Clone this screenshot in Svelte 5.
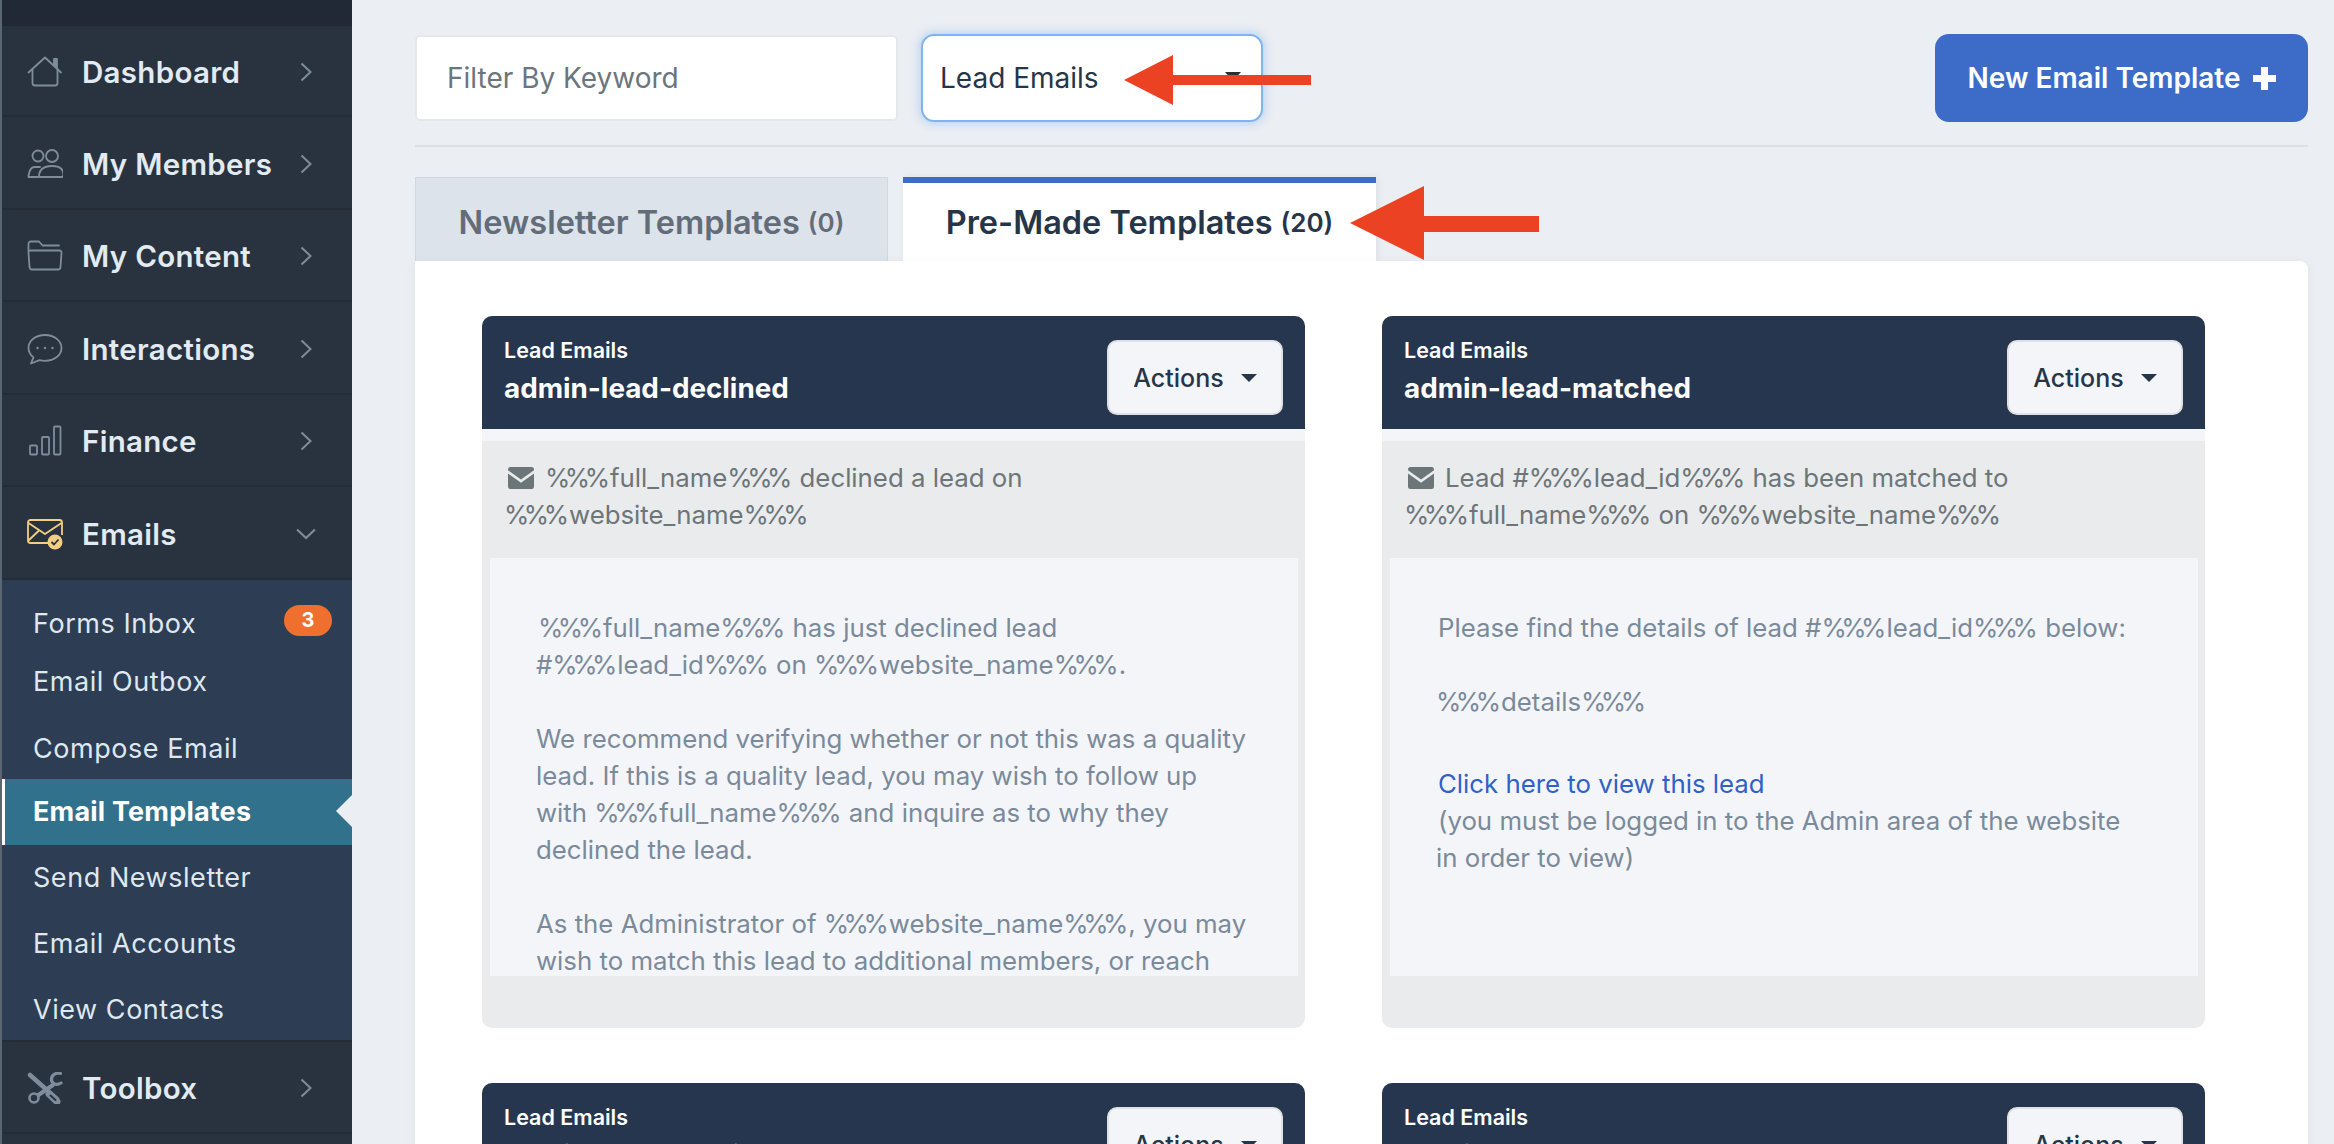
<script>
  const topNav = [
    { label: 'Dashboard', icon: 'home' },
    { label: 'My Members', icon: 'members' },
    { label: 'My Content', icon: 'folder' },
    { label: 'Interactions', icon: 'chat' },
    { label: 'Finance', icon: 'bars' }
  ];
  const subNav = [
    { label: 'Forms Inbox', badge: 3, cls: 'inbox' },
    { label: 'Email Outbox', cls: 'outbox' },
    { label: 'Compose Email', cls: 'compose' },
    { label: 'Email Templates', active: true },
    { label: 'Send Newsletter' },
    { label: 'Email Accounts' },
    { label: 'View Contacts' }
  ];

  // the merge tags sit tighter than the rest of the text
  const parts = (text) => text.split(/(%%%)/);
</script>

{#snippet tagged(text)}
  {#each parts(text) as part}{#if part === '%%%'}<span class="pc">%%%</span>{:else}{part}{/if}{/each}
{/snippet}

{#snippet navIcon(name)}
  <svg class="nav-icon" viewBox="0 0 36 32" fill="none" stroke="#7f8d9b" stroke-width="1.8" stroke-linecap="round" stroke-linejoin="round">
    {#if name === 'home'}
      <path d="M1.5 16.5 18 1.5l16 15" />
      <path d="M5.5 13.5V27a2.500 2.500 0 0 0 2.500 2.500h20a2.500 2.500 0 0 0 2.500-2.500V13.500" />
      <path d="M27 3h3v9l-3-2.800z" fill="#7f8d9b" />
    {:else if name === 'members'}
      <circle cx="11" cy="8" r="5.500" />
      <circle cx="25" cy="8" r="6" />
      <path d="M13 19H7.500Q3 19 1.500 27.500V29H11" />
      <path d="M12 29q0-11 13-11t11 11z" />
    {:else if name === 'folder'}
      <path d="M1.500 11V4a2.500 2.500 0 0 1 2.500-2.500h8l3.500 4H32" />
      <path d="M3.500 10.500h29a2 2 0 0 1 2 2.200L33.500 27a2.500 2.500 0 0 1-2.500 2.500H5A2.500 2.500 0 0 1 2.500 27L1.500 12.700a2 2 0 0 1 2-2.200z" />
    {:else if name === 'chat'}
      <path d="M18 2C8.500 2 1.500 7.800 1.500 15c0 3.800 2 7 5 9.400L4 30.500l8.500-3.300c1.800.4 3.600.6 5.500.6 9.500 0 16.500-5.700 16.500-12.800S27.500 2 18 2z" />
      <circle cx="10.500" cy="15" r="1.200" fill="#7f8d9b" stroke="none" />
      <circle cx="18" cy="15" r="1.200" fill="#7f8d9b" stroke="none" />
      <circle cx="25.500" cy="15" r="1.200" fill="#7f8d9b" stroke="none" />
    {:else if name === 'bars'}
      <rect x="3" y="20.500" width="7" height="9" rx="1" />
      <rect x="15" y="12" width="7" height="17.500" rx="1" />
      <rect x="27" y="1.500" width="6.500" height="28" rx="1" />
    {/if}
  </svg>
{/snippet}

{#snippet chevron()}
  <svg class="chev" viewBox="0 0 12 20" fill="none" stroke="#7f8d9b" stroke-width="2"><path d="m1.500 1.500 9 8.500-9 8.500" /></svg>
{/snippet}

{#snippet card(title, body)}
  <article class="card">
    <header class="card-head">
      <div>
        <div class="cat">Lead Emails</div>
        <div class="name">{title}</div>
      </div>
      <button class="actions">Actions <i class="caret"></i></button>
    </header>
    <div class="card-body">
      {@render body()}
    </div>
  </article>
{/snippet}

{#snippet mail()}
  <svg class="mail" viewBox="0 0 26 22"><path fill="#6c7679" d="M2.500 0h21A2.500 2.500 0 0 1 26 2.500v.8L13 12.500 0 3.300v-.8A2.500 2.500 0 0 1 2.500 0zM0 6.500l13 9.200 13-9.200v13a2.500 2.500 0 0 1-2.500 2.500h-21A2.500 2.500 0 0 1 0 19.500z" /></svg>
{/snippet}

{#snippet declined()}
  <div class="subject">{@render mail()}{@render tagged('%%%full_name%%% declined a lead on')}<br />{@render tagged('%%%website_name%%%')}</div>
  <div class="preview">
    <p class="nudge">{@render tagged('%%%full_name%%% has just declined lead')}<br /><span class="back">{@render tagged('#%%%lead_id%%% on %%%website_name%%%.')}</span></p>
    <p>We recommend verifying whether or not this was a quality<br />lead. If this is a quality lead, you may wish to follow up<br />with {@render tagged('%%%full_name%%% and inquire as to why they')}<br />declined the lead.</p>
    <p>As the Administrator of {@render tagged('%%%website_name%%%, you may')}<br />wish to match this lead to additional members, or reach</p>
  </div>
{/snippet}

{#snippet matched()}
  <div class="subject">{@render mail()}{@render tagged('Lead #%%%lead_id%%% has been matched to')}<br />{@render tagged('%%%full_name%%% on %%%website_name%%%')}</div>
  <div class="preview">
    <p class="nudge">{@render tagged('Please find the details of lead #%%%lead_id%%% below:')}</p>
    <p>{@render tagged('%%%details%%%')}</p>
    <p class="link-block"><a href="#lead" class="nudge">Click here to view this lead</a><br /><span class="nudge">(you must be logged in to the Admin area of the website</span><br />in order to view)</p>
  </div>
{/snippet}

{#snippet empty()}
  <div class="subject"></div>
{/snippet}

<div class="app">
  <aside class="sidebar">
    <div class="top"></div>
    {#each topNav as item}
      <div class="nav-row">
        {@render navIcon(item.icon)}
        <span class="nav-label">{item.label}</span>
        {@render chevron()}
      </div>
    {/each}
    <div class="nav-row">
      <svg class="nav-icon" viewBox="0 0 36 32" fill="none" stroke="#f3cf83" stroke-width="1.800" stroke-linejoin="round">
        <path d="M23 25H3.500A2.500 2.500 0 0 1 1 22.500v-18A2.500 2.500 0 0 1 3.500 2h29A2.500 2.500 0 0 1 35 4.500V17" />
        <path d="m1.500 5 16.500 11L34.500 5M1.500 22.500 12 12.500" />
        <circle cx="28" cy="24" r="7.500" fill="#f3cf83" stroke="none" />
        <path d="m24.500 24 2.500 2.500 4.500-5" stroke="#29333f" stroke-width="1.800" />
      </svg>
      <span class="nav-label">Emails</span>
      <svg class="chev-down" viewBox="0 0 20 12" fill="none" stroke="#7f8d9b" stroke-width="2"><path d="m1 1.500 9 8.500 9-8.500" /></svg>
    </div>
    <nav class="subnav">
      {#each subNav as item}
        <div class="sub-row {item.cls ?? ''}" class:active={item.active}>
          <span>{item.label}</span>
          {#if item.badge}<span class="badge">{item.badge}</span>{/if}
        </div>
      {/each}
    </nav>
    <div class="nav-row">
      <svg class="nav-icon tools" viewBox="0 0 36 32" fill="none" stroke="#7f8d9b" stroke-linecap="round" stroke-linejoin="round">
        <path d="M3 3 30 27" stroke-width="4.500" />
        <path d="m22 22 8 7.500" stroke="#7f8d9b" stroke-width="7" />
        <path d="m23.500 23.500 5 4.500" stroke="#29333f" stroke-width="2" />
        <path d="M26 13 7 26" stroke-width="4" />
        <circle cx="7" cy="26" r="4.500" stroke-width="2.600" fill="#29333f" />
        <path d="M33.500 1.500c-5-1-9 1.500-9 6 0 4 4.500 6.500 9.500 3.500" stroke-width="3.200" />
      </svg>
      <span class="nav-label">Toolbox</span>
      {@render chevron()}
    </div>
  </aside>

  <main class="main">
    <div class="toolbar">
      <div class="filter">Filter By Keyword</div>
      <div class="select">Lead Emails<i class="select-caret"></i></div>
      <button class="new-btn">New Email Template <span class="plus"></span></button>
    </div>

    <div class="tabs">
      <div class="tab">Newsletter Templates <small>(0)</small></div>
      <div class="tab on">Pre-Made Templates <small>(20)</small></div>
    </div>

    <section class="panel">
      {@render card('admin-lead-declined', declined)}
      {@render card('admin-lead-matched', matched)}
      {@render card('admin-lead-received', empty)}
      {@render card('admin-lead-accepted', empty)}
    </section>
  </main>

  <svg class="arrow one" viewBox="0 0 187 50"><path fill="#ec4224" d="M0 25 49 0v20h138v10H49v20z" /></svg>
  <svg class="arrow two" viewBox="0 0 189 74"><path fill="#ec4224" d="M0 37 74 0v30h115v16H74v28z" /></svg>
</div>

<style>
  :global(body) { margin: 0; }

  .app {
    position: relative;
    display: flex;
    height: 1144px;
    overflow: hidden;
    background: #ebeef3;
    font-family: Inter, "Noto Sans", sans-serif;
    color: #263548;
  }

  /* sidebar */
  .sidebar {
    flex: 0 0 350px;
    border-left: 2px solid #5b6673;
    background: #29333f;
    display: flex;
    flex-direction: column;
  }
  .top { height: 26px; flex: none; background: #222936; }
  .nav-row {
    height: 87.500px;
    padding-top: 3px;
    flex: none;
    border-bottom: 2px solid #232c37;
    display: flex;
    align-items: center;
    padding-left: 25px;
  }
  .top + .nav-row { height: 86px; }
  .nav-icon { width: 36px; height: 32px; margin-right: 19px; flex: none; }
  .nav-label {
    font-size: 29.500px;
    font-weight: 600;
    letter-spacing: 0.3px;
    color: #e2eaf2;
    flex: 1;
  }
  .chev { width: 12px; height: 20px; margin-right: 40px; }
  .chev-down { width: 20px; height: 12px; margin-right: 36px; }

  .subnav {
    height: 462px;
    flex: none;
    background: #2c3d54;
    border-bottom: 2px solid #232c37;
    box-sizing: border-box;
    padding-top: 22px;
  }
  .sub-row {
    display: flex;
    align-items: center;
    justify-content: space-between;
    height: 66px;
    padding: 0 20px 0 31px;
    font-size: 27px;
    letter-spacing: 0.55px;
    color: #dfe7ef;
    position: relative;
  }
  .sub-row.inbox { height: 44px; }
  .sub-row.outbox { height: 72px; }
  .sub-row.compose { height: 61px; }
  .sub-row.active {
    background: #31718c;
    border-left: 3px solid #fff;
    padding-left: 28px;
    color: #fff;
    font-weight: 700;
    letter-spacing: 0.2px;
  }
  .sub-row.active::after {
    content: '';
    position: absolute;
    right: 0;
    top: 16px;
    border: 16px solid transparent;
    border-left: 0;
    border-right-color: #ebeef3;
  }
  .badge {
    width: 48px;
    height: 31px;
    border-radius: 16px;
    background: #ef6f2e;
    color: #fff;
    font-size: 20px;
    font-weight: 700;
    letter-spacing: 0;
    text-align: center;
    line-height: 31px;
    margin-top: -6px;
  }

  /* main */
  .main {
    flex: 1;
    padding: 34px 26px 0 63px;
    min-width: 0;
  }
  .toolbar {
    display: flex;
    align-items: stretch;
    height: 88px;
    padding-bottom: 23px;
    border-bottom: 2px solid #dcdfe3;
  }
  .filter {
    box-sizing: border-box;
    width: 483px;
    margin: 1px 0;
    border: 2px solid #e6e7ea;
    border-radius: 5px;
    background: #fff;
    padding-left: 30px;
    display: flex;
    align-items: center;
    font-size: 28px;
    color: #6c757d;
  }
  .select {
    box-sizing: border-box;
    width: 342px;
    margin-left: 23px;
    border: 2px solid #80b4ee;
    border-radius: 13px;
    background: #fff;
    box-shadow: 0 0 8px 2px rgba(128, 180, 238, 0.45);
    padding-left: 17px;
    display: flex;
    align-items: center;
    font-size: 28px;
    color: #263548;
    position: relative;
  }
  .select-caret {
    position: absolute;
    left: 302px;
    top: 36px;
    border: 8px solid transparent;
    border-top: 9px solid #2a2f36;
    border-bottom: 0;
  }
  .new-btn {
    margin-left: auto;
    width: 373px;
    border: 0;
    border-radius: 14px;
    background: #3d6cc8;
    color: #fff;
    font: 600 28px Inter, "Noto Sans", sans-serif;
    padding: 0;
    display: flex;
    align-items: center;
    justify-content: center;
    gap: 12px;
  }
  .plus {
    width: 23px;
    height: 23px;
    background:
      linear-gradient(#fff, #fff) center / 100% 7px no-repeat,
      linear-gradient(#fff, #fff) center / 7px 100% no-repeat;
    border-radius: 3px;
  }

  .tabs {
    display: flex;
    gap: 15px;
    margin-top: 30px;
    height: 84px;
  }
  .tab {
    box-sizing: border-box;
    width: 473px;
    background: #dde3ea;
    border: 1px solid #d0d9e3;
    border-bottom: 0;
    padding-top: 5px;
    display: flex;
    align-items: center;
    justify-content: center;
    gap: 8px;
    font-size: 32.500px;
    font-weight: 600;
    color: #636d79;
  }
  .tab small { font-size: 26px; }
  .tab.on {
    background: #fff;
    border: 0;
    border-top: 6px solid #3d6cc8;
    padding-top: 0;
    color: #263548;
    box-shadow: 2px 0 6px rgba(120, 130, 150, 0.12);
  }

  .panel {
    background: #fff;
    border-radius: 0 8px 8px 8px;
    box-shadow: 0 2px 10px rgba(120, 130, 150, 0.1);
    padding: 55px 103px 55px 67px;
    display: grid;
    grid-template-columns: 823px 823px;
    column-gap: 77px;
    row-gap: 55px;
    position: relative;
  }

  .card {
    height: 712px;
    border-radius: 10px;
    overflow: hidden;
    display: flex;
    flex-direction: column;
    background: #eaebed;
  }
  .card-head {
    flex: none;
    height: 113px;
    box-sizing: border-box;
    background: #26364e;
    color: #fff;
    display: flex;
    justify-content: space-between;
    align-items: flex-start;
    padding: 21px 22px 0 22px;
  }
  .cat { font-size: 21.500px; font-weight: 600; line-height: 26px; }
  .name { font-size: 27.800px; font-weight: 700; line-height: 36px; margin-top: 7px; }
  .actions {
    box-sizing: border-box;
    width: 176px;
    height: 75px;
    margin-top: 3px;
    border: 2px solid #dfe1e4;
    border-radius: 10px;
    background: #f3f5f9;
    color: #263548;
    font: 500 25px Inter, "Noto Sans", sans-serif;
    padding: 0;
    display: flex;
    align-items: center;
    justify-content: center;
    gap: 17px;
  }
  .caret {
    border: 8px solid transparent;
    border-top: 8px solid #263548;
    border-bottom: 0;
  }
  .card-body {
    flex: 1;
    border-top: 12px solid #f4f5f8;
    display: flex;
    flex-direction: column;
    min-height: 0;
  }
  .subject {
    font-size: 25.800px;
    line-height: 37px;
    color: #6c7679;
    padding: 18px 22px 0;
    height: 99px;
    flex: none;
    white-space: nowrap;
  }
  .mail { width: 26px; height: 22px; margin: 0 11px 0 4px; vertical-align: -2px; }
  .pc { letter-spacing: -5.500px; margin-right: 5.500px; }
  .preview {
    height: 418px;
    margin: 0 7px 0 8px;
    overflow: hidden;
    flex: none;
    background: #f4f5f8;
    box-sizing: border-box;
    padding: 51px 20px 0 46px;
    font-size: 25.800px;
    line-height: 37px;
    color: #7a8a9b;
    white-space: nowrap;
  }
  .preview p { margin: 0 0 37px; }
  .preview .link-block { margin-top: 45px; }
  .nudge { position: relative; left: 2px; }
  .back { position: relative; left: -2px; }
  .preview a { color: #2f62c8; text-decoration: none; }

  .arrow { position: absolute; }
  .one { left: 1124px; top: 55px; width: 187px; height: 50px; }
  .two { left: 1350px; top: 186px; width: 189px; height: 74px; }
</style>
